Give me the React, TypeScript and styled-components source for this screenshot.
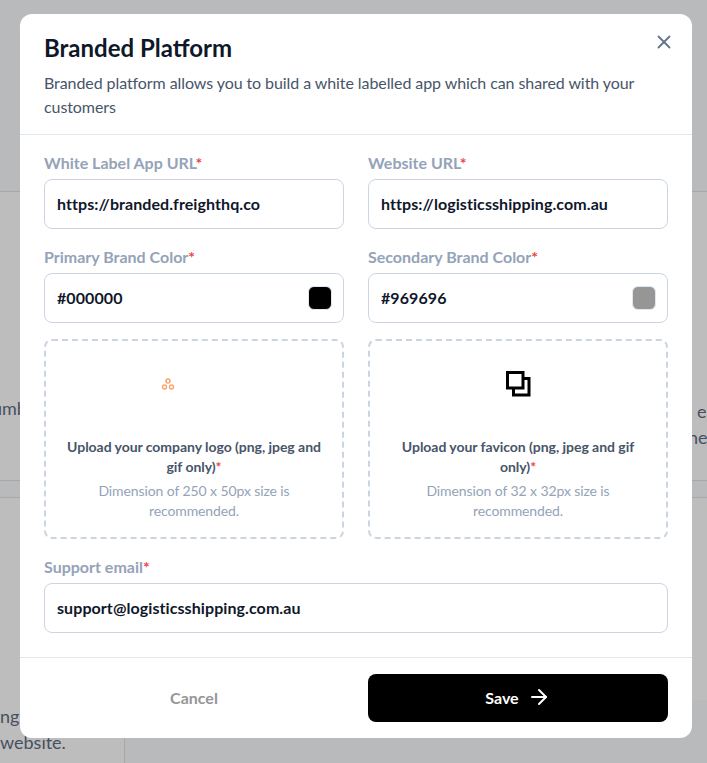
import styled, { createGlobalStyle } from 'styled-components';
import { ArrowRight, X } from 'lucide-react';

const GlobalStyle = createGlobalStyle`
  * {
    box-sizing: border-box;
  }

  html,
  body {
    margin: 0;
    padding: 0;
    height: 100%;
  }

  body {
    font-family: 'Lato', 'Liberation Sans', sans-serif;
    overflow: hidden;
  }
`;

const LogoIcon = () => (
  <svg width="66" height="14" viewBox="0 0 66 14" fill="none" stroke="#fca673" strokeWidth="1.5">
    <circle cx="7" cy="4" r="2" />
    <circle cx="3.5" cy="10" r="2" />
    <circle cx="10.5" cy="10" r="2" />
  </svg>
);

const FaviconIcon = () => (
  <svg width="25" height="26" viewBox="0 0 25 26" fill="none">
    <path d="M18 7.5H23V24H7.5V18" stroke="#000" strokeWidth="3" />
    <rect x="1.5" y="1.5" width="15.5" height="15.5" stroke="#000" strokeWidth="3" />
  </svg>
);

const Required = () => <Star>*</Star>;

export default function App() {
  return (
    <>
      <GlobalStyle />
      <Page>
        <Backdrop>
          <Band $top={192} $bottom={283} />
          <Band $top={498} $bottom={0} />
          <Rule $top={191} />
          <Rule $top={480} />
          <Rule $top={497} />
          <Divider />
          <GhostText $left={-8} $top={395}>umber</GhostText>
          <GhostText $left={697} $top={398}>e</GhostText>
          <GhostText $left={688} $top={424}>ne</GhostText>
          <GhostText $left={0} $top={703}>ng s</GhostText>
          <GhostText $left={0} $top={729}>website.</GhostText>
        </Backdrop>

        <Modal>
          <Header>
            <Title>Branded Platform</Title>
            <Subtitle>
              Branded platform allows you to build a white labelled app which can shared with your
              customers
            </Subtitle>
            <CloseButton aria-label="Close">
              <X size={22} strokeWidth={2} />
            </CloseButton>
          </Header>

          <Body>
            <TwoColumns>
              <Field>
                <Label>White Label App URL<Required /></Label>
                <InputBox>
                  <Input readOnly value="https://branded.freighthq.co" />
                </InputBox>
              </Field>
              <Field>
                <Label>Website URL<Required /></Label>
                <InputBox>
                  <Input readOnly value="https://logisticsshipping.com.au" />
                </InputBox>
              </Field>
              <Field>
                <Label>Primary Brand Color<Required /></Label>
                <InputBox>
                  <Input readOnly value="#000000" />
                  <Swatch $color="#000000" />
                </InputBox>
              </Field>
              <Field>
                <Label>Secondary Brand Color<Required /></Label>
                <InputBox>
                  <Input readOnly value="#969696" />
                  <Swatch $color="#969696" />
                </InputBox>
              </Field>
              <UploadBox>
                <UploadIcon>
                  <LogoIcon />
                </UploadIcon>
                <UploadTitle>
                  Upload your company logo (png, jpeg and gif only)<Required />
                </UploadTitle>
                <UploadHint>Dimension of 250 x 50px size is recommended.</UploadHint>
              </UploadBox>
              <UploadBox>
                <UploadIcon>
                  <FaviconIcon />
                </UploadIcon>
                <UploadTitle>
                  Upload your favicon (png, jpeg and gif only)<Required />
                </UploadTitle>
                <UploadHint>Dimension of 32 x 32px size is recommended.</UploadHint>
              </UploadBox>
            </TwoColumns>

            <Field>
              <Label>Support email<Required /></Label>
              <InputBox>
                <Input readOnly value="support@logisticsshipping.com.au" />
              </InputBox>
            </Field>
          </Body>

          <Footer>
            <CancelButton>Cancel</CancelButton>
            <SaveButton>
              Save
              <ArrowRight size={24} strokeWidth={2} />
            </SaveButton>
          </Footer>
        </Modal>
      </Page>
    </>
  );
}

const Page = styled.div`
  position: relative;
  width: 100%;
  height: 100vh;
  padding-top: 14px;
  background-color: #b9babc;
  overflow: hidden;
`;

const Backdrop = styled.div`
  position: absolute;
  inset: 0;
`;

const Band = styled.div<{ $top: number; $bottom: number }>`
  position: absolute;
  top: ${(p) => p.$top}px;
  bottom: ${(p) => p.$bottom}px;
  left: 0;
  right: 0;
  background-color: #bdbdbd;
`;

const Rule = styled.div<{ $top: number }>`
  position: absolute;
  top: ${(p) => p.$top}px;
  left: 0;
  right: 0;
  height: 1px;
  background-color: #a4a9b0;
`;

const Divider = styled.div`
  position: absolute;
  top: 700px;
  bottom: 0;
  left: 124px;
  right: 0;
  border-left: 1px solid #a4a9b0;
  background-color: #b9babc;
`;

const GhostText = styled.span<{ $left: number; $top: number }>`
  position: absolute;
  top: ${(p) => p.$top}px;
  left: ${(p) => p.$left}px;
  font-size: 18px;
  line-height: 26px;
  color: #475060;
  white-space: nowrap;
`;

const Modal = styled.div`
  position: relative;
  display: flex;
  flex-direction: column;
  width: 672px;
  height: 724px;
  margin-left: 20px;
  border-radius: 12px;
  background-color: #fff;
`;

const Header = styled.header`
  position: relative;
  padding: 18px 24px 15px;
  border-bottom: 1px solid #e2e8f0;
`;

const Title = styled.h2`
  margin: 0 0 7px;
  font-size: 24px;
  line-height: 32px;
  font-weight: 700;
  color: #0f172a;
`;

const Subtitle = styled.p`
  margin: 0;
  font-size: 16px;
  line-height: 24px;
  letter-spacing: -0.08px;
  color: #475569;
`;

const CloseButton = styled.button`
  position: absolute;
  top: 17px;
  right: 17px;
  display: flex;
  padding: 0;
  border: 0;
  background: none;
  color: #64748b;
`;

const Body = styled.div`
  display: flex;
  flex-direction: column;
  gap: 16px;
  padding: 16px 24px 24px;
`;

const TwoColumns = styled.div`
  display: grid;
  grid-template-columns: 300px 300px;
  gap: 16px 24px;
`;

const Field = styled.div`
  display: flex;
  flex-direction: column;
  gap: 4px;
`;

const Label = styled.label`
  font-size: 16px;
  line-height: 24px;
  font-weight: 700;
  color: #94a3b8;
`;

const Star = styled.span`
  color: #ef4444;
`;

const InputBox = styled.div`
  display: flex;
  align-items: center;
  height: 50px;
  padding: 0 11px 0 12px;
  border: 1px solid #cbd5e1;
  border-radius: 8px;
  background-color: #fff;
`;

const Input = styled.input`
  flex: 1;
  min-width: 0;
  padding: 0 0 2px;
  border: 0;
  outline: 0;
  font-family: inherit;
  font-size: 16px;
  font-weight: 700;
  letter-spacing: 0.08px;
  color: #0f172a;
`;

const Swatch = styled.span<{ $color: string }>`
  width: 24px;
  height: 24px;
  border: 1px solid #e2e8f0;
  border-radius: 6px;
  background-color: ${(p) => p.$color};
`;

const UploadBox = styled.div`
  display: flex;
  flex-direction: column;
  align-items: center;
  height: 200px;
  padding: 30px 16px 0;
  border: 2px dashed #cbd5e1;
  border-radius: 8px;
  text-align: center;
`;

const UploadIcon = styled.div`
  display: flex;
  align-items: center;
  justify-content: center;
  height: 26px;
  margin-bottom: 40px;
`;

const UploadTitle = styled.p`
  margin: 0 0 4px;
  font-size: 14px;
  line-height: 20px;
  font-weight: 700;
  letter-spacing: -0.04px;
  color: #475569;
`;

const UploadHint = styled.p`
  margin: 0;
  font-size: 14px;
  line-height: 20px;
  letter-spacing: -0.1px;
  color: #94a3b8;
`;

const Footer = styled.footer`
  display: grid;
  grid-template-columns: 300px 300px;
  gap: 24px;
  padding: 16px 24px;
  border-top: 1px solid #e2e8f0;
`;

const CancelButton = styled.button`
  height: 48px;
  padding: 0 0 2px;
  border: 0;
  background: none;
  font-family: inherit;
  font-size: 16px;
  font-weight: 700;
  color: #969696;
`;

const SaveButton = styled.button`
  display: flex;
  align-items: center;
  justify-content: center;
  gap: 8px;
  height: 48px;
  padding: 0 0 2px;
  border: 0;
  border-radius: 8px;
  background-color: #000;
  font-family: inherit;
  font-size: 16px;
  font-weight: 700;
  color: #fff;
`;
